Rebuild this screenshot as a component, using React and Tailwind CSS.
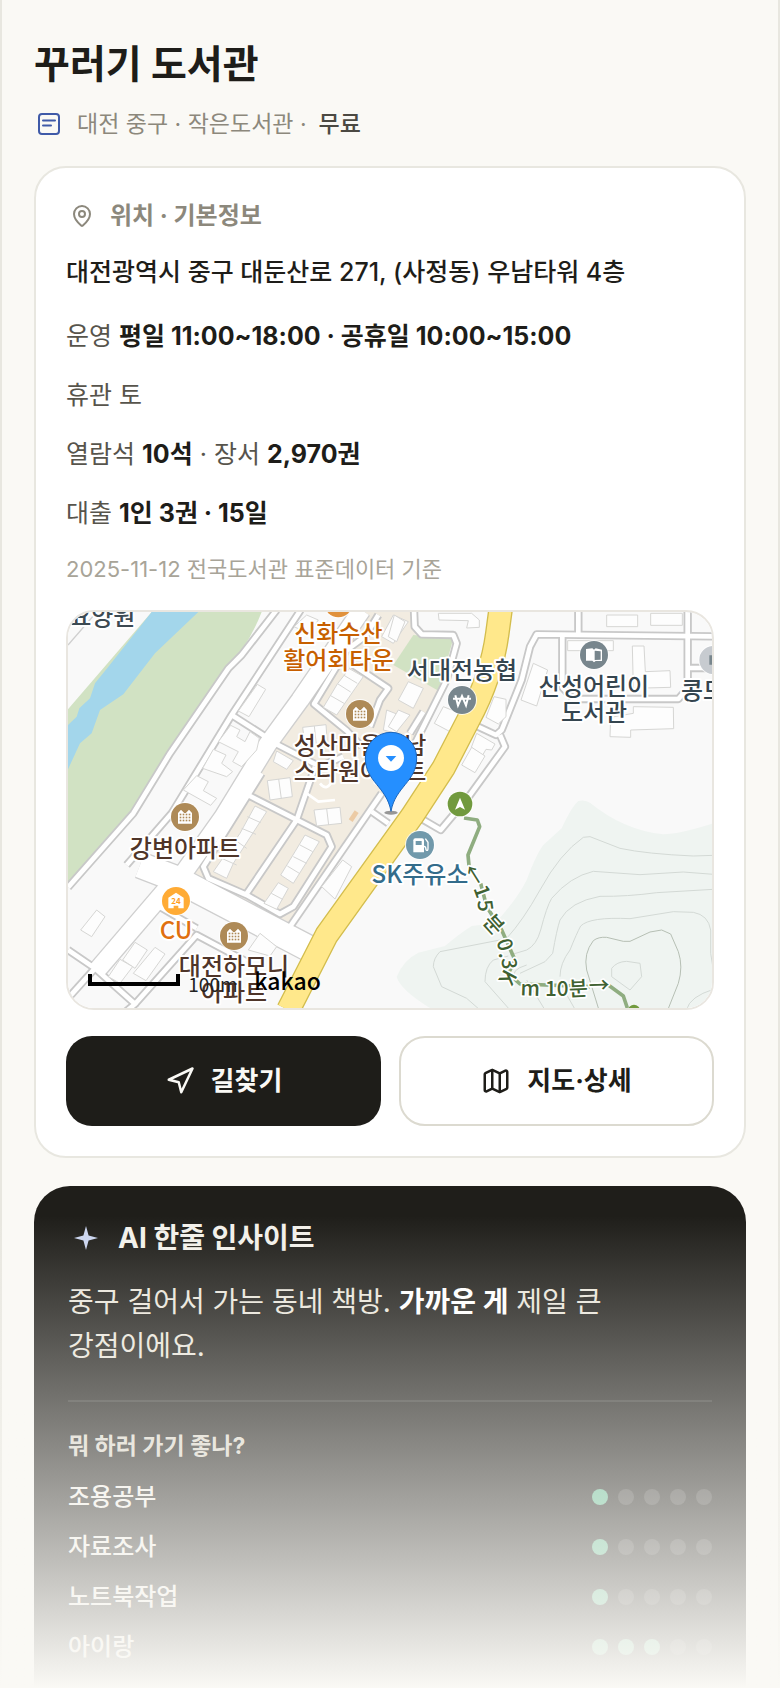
import React from "react";
import { MapPin, Map as MapIcon, Navigation } from "lucide-react";

const ratings = [
  { label: "조용공부", score: 1 },
  { label: "자료조사", score: 1 },
  { label: "노트북작업", score: 1 },
  { label: "아이랑", score: 3 },
];

const lanes = [
  "M650 30 L545 165 L505 205 L330 460 L220 640 L24 862",
  "M722 30 L515 345 L335 640 L200 795",
  "M515 345 L632 420",
  "M860 150 L762 312 L860 392 L905 440",
  "M880 195 L985 265 L960 300 L930 380",
  "M605 520 L430 800 L445 835 L560 885 L660 942 L700 920 L815 740 L800 705 L570 588",
  "M765 500 L710 660 L555 888",
  "M645 430 L780 500 L850 470",
  "M965 580 L690 980",
  "M935 635 L985 670",
  "M955 45 L915 110 L860 150",
  "M1062 30 L1064 80 L1085 103 L1180 105 L1190 130 L1160 240 L1080 400 L1030 500",
  "M1555 30 L1555 105",
  "M1960 109 L1430 103 L1410 140 L1385 240 L1325 390 L1308 405 L1250 378",
  "M1320 405 L1335 440 L1230 585 L1142 690 L1082 655",
  "M1883 30 L1883 265 L1855 297 L1540 297 L1507 262 L1507 110",
  "M1883 204 L1960 204",
  "M24 1050 L105 1105 L225 1212 L24 1380",
  "M225 1212 L410 1005 L560 1085",
  "M290 915 L410 985",
  "M105 1105 L24 1195",
  "M1090 335 L1050 400",
];

const buildings = [
  "592,253 617,268 567,350 535,333",
  "512,376 540,390 530,410 555,425 570,395 598,415 590,450 545,500 518,485 535,455 475,425",
  "460,448 498,465 485,490 518,515 500,530 428,505",
  "410,527 445,545 430,572 470,595 452,616 370,570",
  "868,206 910,230 830,345 790,322 832,252",
  "650,453 700,482 680,508 640,485",
  "622,542 690,533 697,590 630,600",
  "728,382 798,374 802,430 735,438",
  "585,618 620,635 520,790 500,835 460,815 540,700",
  "735,705 778,725 700,850 662,825 705,755",
  "655,848 685,865 650,928 612,910",
  "762,630 840,622 845,670 770,678",
  "848,780 875,800 825,897 785,860",
  "110,930 135,950 95,1010 62,990",
  "225,1027 262,1050 225,1105 188,1080",
  "285,1042 315,1062 258,1142 220,1120",
  "180,1078 218,1100 180,1150 145,1130",
  "600,1000 650,1040 630,1068 565,1050",
  "1000,45 1045,65 1000,130 965,110",
  "740,45 775,60 745,100 702,80",
  "980,330 1030,350 1010,400 970,390",
  "1135,40 1235,40 1258,60 1258,82 1220,84 1225,62 1137,60",
  "1640,45 1733,45 1733,80 1640,80",
  "1772,40 1867,40 1867,76 1772,76",
  "1717,138 1752,138 1756,215 1830,212 1832,262 1720,265",
  "1523,122 1660,122 1660,152 1523,152",
  "1420,190 1463,210 1430,318 1383,300",
  "1302,290 1338,298 1338,350 1315,372 1278,352",
  "1250,400 1305,432 1295,450 1278,448 1268,465 1234,442",
  "1235,442 1275,468 1245,518 1205,495",
  "1150,320 1200,340 1170,395 1123,370",
  "1720,320 1840,322 1841,386 1712,390 1712,412 1650,410 1652,352 1720,340",
  "1045,245 1090,265 1060,325 1015,300",
  "1003,45 1035,65 1010,125 985,110",
  "1015,330 1050,345 1010,395 985,380",
];

const contours = [
  "M1330 1018 L1140 1055 Q1120 1075 1120 1100 L1145 1160 L1220 1195 L1260 1230",
  "M1340 1015 Q1390 960 1440 870 Q1500 760 1570 712 L1590 710 L1680 745 Q1760 762 1900 768 L1960 766",
  "M1350 1065 L1400 1050 Q1430 1035 1442 990 Q1460 920 1475 895 Q1530 830 1600 814 L1740 824 L1870 816 L1960 823",
  "M1345 1068 L1300 1080 Q1275 1100 1275 1145 L1350 1230",
  "M1380 1120 L1455 1085 L1478 1060 Q1490 990 1500 960 Q1530 905 1620 889 Q1700 890 1790 878 L1960 868",
  "M1365 1135 Q1350 1110 1400 1095 M1400 1140 L1455 1230",
  "M1500 1130 Q1500 1090 1530 1050 Q1550 1000 1562 978 Q1590 950 1710 956 L1840 935 L1900 937 Q1945 945 1952 990 L1952 1060 L1960 1110",
  "M1512 1170 L1545 1228",
  "M1880 1228 Q1890 1190 1960 1168",
  "M1655 1105 Q1670 1085 1700 1084 L1740 1090 L1745 1130 L1710 1170 L1655 1130 Z",
];

function Label({ x, y, fill, anchor = "middle", children }) {
  return (
    <text
      x={x}
      y={y}
      fill={fill}
      textAnchor={anchor}
      fontSize="72"
      fontWeight="500"
      stroke="#fff"
      strokeWidth="12"
      strokeLinejoin="round"
      paintOrder="stroke"
    >
      {children}
    </text>
  );
}

function TrailGlyph({ x, y, rotate, children }) {
  return (
    <text
      transform={`translate(${x} ${y}) rotate(${rotate})`}
      fill="#3f6132"
      textAnchor="middle"
      dominantBaseline="central"
      fontSize="62"
      fontWeight="500"
      stroke="#fff"
      strokeWidth="10"
      strokeLinejoin="round"
      paintOrder="stroke"
    >
      {children}
    </text>
  );
}

function Poi({ x, y, fill, r = 42, children }) {
  return (
    <g transform={`translate(${x} ${y})`}>
      <circle r={r + 3} fill="#fff" opacity="0.8" />
      <circle r={r} fill={fill} />
      {children}
    </g>
  );
}

function Apartment({ x, y }) {
  return (
    <Poi x={x} y={y} fill="#ae8a57">
      <path d="M-21 20 V-12 L-12 -22 L-3 -13 V-12 H3 V-13 L12 -22 L21 -12 V20 Z" fill="#fff" />
      {[-8, 1, 10].map((cy) =>
        [-15, -6, 3, 12].map((cx) => (
          <rect key={`${cx}:${cy}`} x={cx - 1} y={cy - 2} width="5" height="5" fill="#ae8a57" />
        ))
      )}
    </Poi>
  );
}

function LibraryMap() {
  return (
    <svg
      viewBox="24 36 1932 1188"
      className="block h-auto w-full font-['Noto_Sans_CJK_KR',sans-serif]"
      role="img"
      aria-label="꾸러기 도서관 지도"
    >
      <rect x="24" y="36" width="1932" height="1188" fill="#f9f9f9" />
      <path d="M24 328 L275 36 H605 Q580 100 545 150 L500 198 L235 608 L175 680 L24 848 Z" fill="#d1e2c3" />
      <path
        d="M275 36 H415 L285 160 L190 283 L120 330 L95 400 L60 430 L24 508 V375 L50 350 L58 325 L90 295 L105 250 L145 200 Z"
        fill="#a3d6eb"
      />
      <path d="M24 135 L110 36" stroke="#cfcfcf" strokeWidth="4" />
      <path
        d="M890 36 H1060 L1068 105 L1180 112 L1140 270 L1080 400 L1000 560 L930 635 L690 970 L385 810 L485 650 L640 440 L700 345 L780 200 Z"
        fill="#f2ece1"
      />
      <path d="M1060 105 L1180 116 L1135 272 L1000 195 Z" fill="#d1e2c3" />
      <path
        d="M1010 1130 Q1030 1080 1075 1058 L1155 1038 Q1200 1000 1235 978 L1305 970 Q1370 900 1400 840 Q1430 760 1450 735 L1505 685 Q1535 620 1555 603 Q1570 598 1590 608 Q1690 690 1810 703 Q1860 702 1960 670 V1230 H1120 Q1020 1170 1010 1130 Z"
        fill="#eff4f1"
      />
      <g fill="none" stroke="#d3d9d5" strokeWidth="3">
        {contours.map((d) => (
          <path key={d} d={d} />
        ))}
        <path
          d="M1615 1224 L1580 1110 Q1570 1060 1600 1022 Q1615 1010 1640 1012 L1690 1024 L1710 1024 L1770 996 L1805 990 L1832 1002 L1855 1055 Q1870 1100 1855 1150 L1824 1228"
          stroke="#b6bfb4"
        />
      </g>

      <g fill="none" strokeLinejoin="round">
        <path d="M905 30 L720 300 L625 430 L490 650 L370 820" stroke="#cfcfcf" strokeWidth="60" />
        <path d="M240 795 L345 835 L765 1055" stroke="#cfcfcf" strokeWidth="84" />
        <path d="M330 855 L110 1112" stroke="#cfcfcf" strokeWidth="60" />
        {lanes.map((d) => (
          <path key={d} d={d} stroke="#c8c8c8" strokeWidth="25" />
        ))}
        <path d="M905 30 L720 300 L625 430 L490 650 L370 820" stroke="#fff" strokeWidth="52" />
        <path d="M240 795 L345 835 L765 1055" stroke="#fff" strokeWidth="76" />
        <path d="M330 855 L110 1112" stroke="#fff" strokeWidth="52" />
        {lanes.map((d) => (
          <path key={d} d={d} stroke="#fff" strokeWidth="14" />
        ))}
        <path d="M740 580 L775 605 L825 600 M780 550 Q800 575 815 545" stroke="#fff" strokeWidth="8" />
        <path d="M890 635 L872 662" stroke="#eccba5" strokeWidth="14" />
      </g>

      <g fill="#fdfdfd" stroke="#d6d6d4" strokeWidth="3">
        {buildings.map((points) => (
          <polygon key={points} points={points} />
        ))}
        <path
          d="M852 226 L892 250 M834 252 L872 276 M812 287 L852 310 M656 537 L664 596 M562 650 L602 668 M545 685 L588 703 M525 720 L560 745 M485 775 L530 795 M720 735 L758 755 M700 770 L740 790 M682 798 L718 820 M634 880 L668 898 M800 626 L806 675 M763 378 L769 434"
          fill="none"
        />
      </g>

      <g fill="none" strokeLinejoin="round">
        <path
          d="M1322 26 L1312 100 Q1295 230 1225 360 L1150 505 L1055 650 L800 1005 L685 1230"
          stroke="#d3bd4d"
          strokeWidth="74"
        />
        <path
          d="M1322 26 L1312 100 Q1295 230 1225 360 L1150 505 L1055 650 L800 1005 L685 1230"
          stroke="#ffe88b"
          strokeWidth="66"
        />
      </g>

      <g fill="none" stroke="#8fad80" strokeWidth="11" strokeLinejoin="round">
        <path d="M1212 654 L1252 660 L1259 680 L1224 765 L1227 797" />
        <path d="M1262 850 L1280 920 L1325 990 L1365 1080 L1345 1120 L1380 1152 L1590 1160" />
        <path d="M1645 1155 L1690 1188 L1702 1224" />
      </g>
      <TrailGlyph x={1245} y={822} rotate={58}>←</TrailGlyph>
      <TrailGlyph x={1271} y={872} rotate={70}>1</TrailGlyph>
      <TrailGlyph x={1281} y={916} rotate={82}>5</TrailGlyph>
      <TrailGlyph x={1305} y={970} rotate={48}>분</TrailGlyph>
      <TrailGlyph x={1340} y={1032} rotate={72}>0</TrailGlyph>
      <TrailGlyph x={1343} y={1060} rotate={72}>.</TrailGlyph>
      <TrailGlyph x={1353} y={1090} rotate={85}>3</TrailGlyph>
      <TrailGlyph x={1348} y={1135} rotate={118}>K</TrailGlyph>
      <TrailGlyph x={1411} y={1160} rotate={2}>m</TrailGlyph>
      <TrailGlyph x={1490} y={1162} rotate={0}>10</TrailGlyph>
      <TrailGlyph x={1555} y={1160} rotate={-3}>분</TrailGlyph>
      <TrailGlyph x={1617} y={1151} rotate={-2}>→</TrailGlyph>

      <Poi x={835} y={10} fill="#e0913c" />
      <Apartment x={900} y={342} />
      <Apartment x={375} y={651} />
      <Apartment x={522} y={1008} />
      <Poi x={1206} y={300} fill="#78868d">
        <path d="M-20 -14 L-12 16 L0 -12 L12 16 L20 -14 M-27 -4 H27" fill="none" stroke="#fff" strokeWidth="6" />
      </Poi>
      <Poi x={1602} y={165} fill="#78868d">
        <path d="M-24 -18 L-5 -20 L0 -16 L5 -20 L24 -16 V18 H5 L0 22 L-5 17 H-24 Z" fill="#fff" />
        <path d="M2 -13 L20 -11 V14 L2 15 Z" fill="#78868d" />
      </Poi>
      <Poi x={1960} y={180} fill="#c7cbd0">
        <path d="M-12 -14 H10 V14 H-12 Z" fill="#78868d" />
      </Poi>
      <Poi x={1080} y={735} fill="#7199ab">
        <path d="M-20 22 V-14 Q-20 -20 -14 -20 H6 Q12 -20 12 -14 V22 Z" fill="#fff" />
        <path d="M-13 -12 H5 V0 H-13 Z" fill="#7199ab" />
        <path d="M12 4 Q18 4 18 14 Q24 20 24 10 V-8 L16 -19" fill="none" stroke="#fff" strokeWidth="4" />
      </Poi>
      <Poi x={348} y={903} fill="#ffab35">
        <path d="M-23 22 V-10 L0 -25 L23 -10 V22 H7 V14 H-7 V22 Z" fill="#fff" />
        <text y="9" textAnchor="middle" fontSize="24" fontWeight="700" fill="#ff9d1c">24</text>
      </Poi>
      <Poi x={1200} y={612} r={37} fill="#719a3e">
        <path d="M0 -19 L15 17 L0 9 L-15 17 Z" fill="#fff" />
      </Poi>
      <circle cx="1722" cy="1232" r="18" fill="#719a3e" />

      <Label x={127} y={74} fill="#3d4a52">요양원</Label>
      <Label x={835} y={127} fill="#c75f00">신화수산</Label>
      <Label x={835} y={207} fill="#c75f00">활어회타운</Label>
      <Label x={900} y={462} fill="#4f3529">성산마을우남</Label>
      <Label x={900} y={540} fill="#4f3529">스타원아파트</Label>
      <Label x={375} y={771} fill="#4f3529">강변아파트</Label>
      <Label x={348} y={1018} fill="#e0700f">CU</Label>
      <Label x={522} y={1124} fill="#4f3529">대전하모니</Label>
      <Label x={522} y={1204} fill="#4f3529">아파트</Label>
      <Label x={1080} y={850} fill="#336c8b">SK주유소</Label>
      <Label x={1206} y={236} fill="#35454f">서대전농협</Label>
      <Label x={1602} y={284} fill="#35454f">산성어린이</Label>
      <Label x={1602} y={363} fill="#35454f">도서관</Label>
      <Label x={1863} y={297} fill="#35454f" anchor="start">콩드</Label>

      <ellipse cx="993" cy="638" rx="20" ry="6" fill="#555" opacity="0.6" />
      <path
        d="M993 634 C980 560 916 545 916 474 A77 77 0 0 1 1070 474 C1070 545 1006 560 993 634 Z"
        fill="#258fff"
        stroke="#1b66bd"
        strokeWidth="3"
      />
      <circle cx="993" cy="474" r="39" fill="#fff" />
      <path d="M977 468 H1009 L993 485 Z" fill="#258fff" />

      <path d="M90 1122 V1152 H354 V1122" fill="none" stroke="#000" strokeWidth="12" />
      <text x="385" y="1176" fontSize="57" fill="#222">100m</text>
      <text x="583" y="1170" fontSize="69" fontWeight="500" fill="#000">kakao</text>
    </svg>
  );
}

function NoticeIcon() {
  return (
    <svg viewBox="0 0 24 24" className="size-6 shrink-0" fill="none" stroke="#3f5aa8" strokeWidth="2" aria-hidden="true">
      <rect x="2" y="2" width="20" height="20" rx="3" />
      <path d="M6 8.500 H18 M6 13.500 H14" strokeLinecap="round" />
    </svg>
  );
}

function Sparkle() {
  return (
    <svg viewBox="0 0 24 24" className="size-6 shrink-0" fill="#cbd5f0" aria-hidden="true">
      <path d="M12 0 L14.600 9.400 L24 12 L14.600 14.600 L12 24 L9.400 14.600 L0 12 L9.400 9.400 Z" />
    </svg>
  );
}

export default function App() {
  return (
    <main className="relative flex min-h-screen flex-col gap-7 border-x-2 border-[#e8e7e0] bg-[#faf9f5] px-8 pt-10 font-['Inter','Noto_Sans_CJK_KR',sans-serif] break-keep text-[#1e1d19]">
      <header>
        <h1 className="text-[39px] leading-12 font-bold">꾸러기 도서관</h1>
        <div className="mt-[22px] flex items-center pl-[3px] text-[23px] leading-7 text-[#8c887c]">
          <NoticeIcon />
          <p className="ml-4">
            대전 중구 · 작은도서관 ·<span className="ml-3 font-medium text-[#4b4942]">무료</span>
          </p>
        </div>
      </header>

      <section className="rounded-[32px] border-2 border-[#e8e7e0] bg-white px-[30px] pt-8 pb-[30px]">
        <h2 className="flex items-center gap-4 pl-1 text-2xl leading-8 font-bold text-[#8c887c]">
          <MapPin className="size-6" strokeWidth={2} aria-hidden="true" />
          위치 · 기본정보
        </h2>
        <p className="mt-5 text-[25px] leading-10 font-medium">대전광역시 중구 대둔산로 271, (사정동) 우남타워 4층</p>
        <div className="mt-6 flex flex-col gap-[19px] text-[25px] leading-10 text-[#57544c] [&_b]:font-bold [&_b]:text-[#1e1d19]">
          <p>운영 <b>평일 11:00~18:00 · 공휴일 10:00~15:00</b></p>
          <p>휴관 토</p>
          <p>열람석 <b>10석</b> · 장서 <b>2,970권</b></p>
          <p>대출 <b>1인 3권 · 15일</b></p>
        </div>
        <p className="mt-5 text-[22px] leading-8 text-[#a8a498]">2025-11-12 전국도서관 표준데이터 기준</p>
        <div className="mt-[25px] overflow-hidden rounded-[28px] border-2 border-[#e9e6e0]">
          <LibraryMap />
        </div>
        <div className="mt-[26px] grid grid-cols-2 gap-[18px] text-[26px] leading-8 font-bold">
          <button type="button" className="flex h-[90px] items-center justify-center gap-4 rounded-[26px] bg-[#1e1d19] text-[#faf9f5]">
            <Navigation className="size-[30px]" strokeWidth={2} aria-hidden="true" />
            길찾기
          </button>
          <button type="button" className="flex h-[90px] items-center justify-center gap-4 rounded-[26px] border-2 border-[#dcdad0] bg-white">
            <MapIcon className="size-[30px]" strokeWidth={2} aria-hidden="true" />
            지도·상세
          </button>
        </div>
      </section>

      <section className="grow rounded-t-[36px] bg-[#1f1e1a] px-[34px] pt-8 pb-3.5 text-[#f2f0ea]">
        <h2 className="flex items-center gap-5 pl-1.5 text-[28px] leading-10 font-bold">
          <Sparkle />
          AI 한줄 인사이트
        </h2>
        <p className="mt-[22px] text-[28px] leading-11 text-[#e9e5da]">
          중구 걸어서 가는 동네 책방. <b className="font-bold text-white">가까운 게</b> 제일 큰 강점이에요.
        </p>
        <div className="mt-8 border-t-2 border-white/10 pt-7">
          <h3 className="text-[23px] leading-8 font-bold text-[#d9d5c9]">뭐 하러 가기 좋나?</h3>
          <ul className="mt-2.5 text-2xl font-medium">
            {ratings.map((r) => (
              <li key={r.label} className="flex h-[50px] items-center justify-between">
                <span>{r.label}</span>
                <span className="flex gap-2.5" role="img" aria-label={`5점 중 ${r.score}점`}>
                  {[1, 2, 3, 4, 5].map((n) => (
                    <i key={n} className={n <= r.score ? "size-4 rounded-full bg-[#5fb98f]" : "size-4 rounded-full bg-white/15"} />
                  ))}
                </span>
              </li>
            ))}
          </ul>
        </div>
      </section>

      <div className="pointer-events-none absolute -inset-x-0.5 bottom-0 h-[472px] bg-linear-to-b from-[#faf9f5]/0 to-[#faf9f5]" />
    </main>
  );
}
